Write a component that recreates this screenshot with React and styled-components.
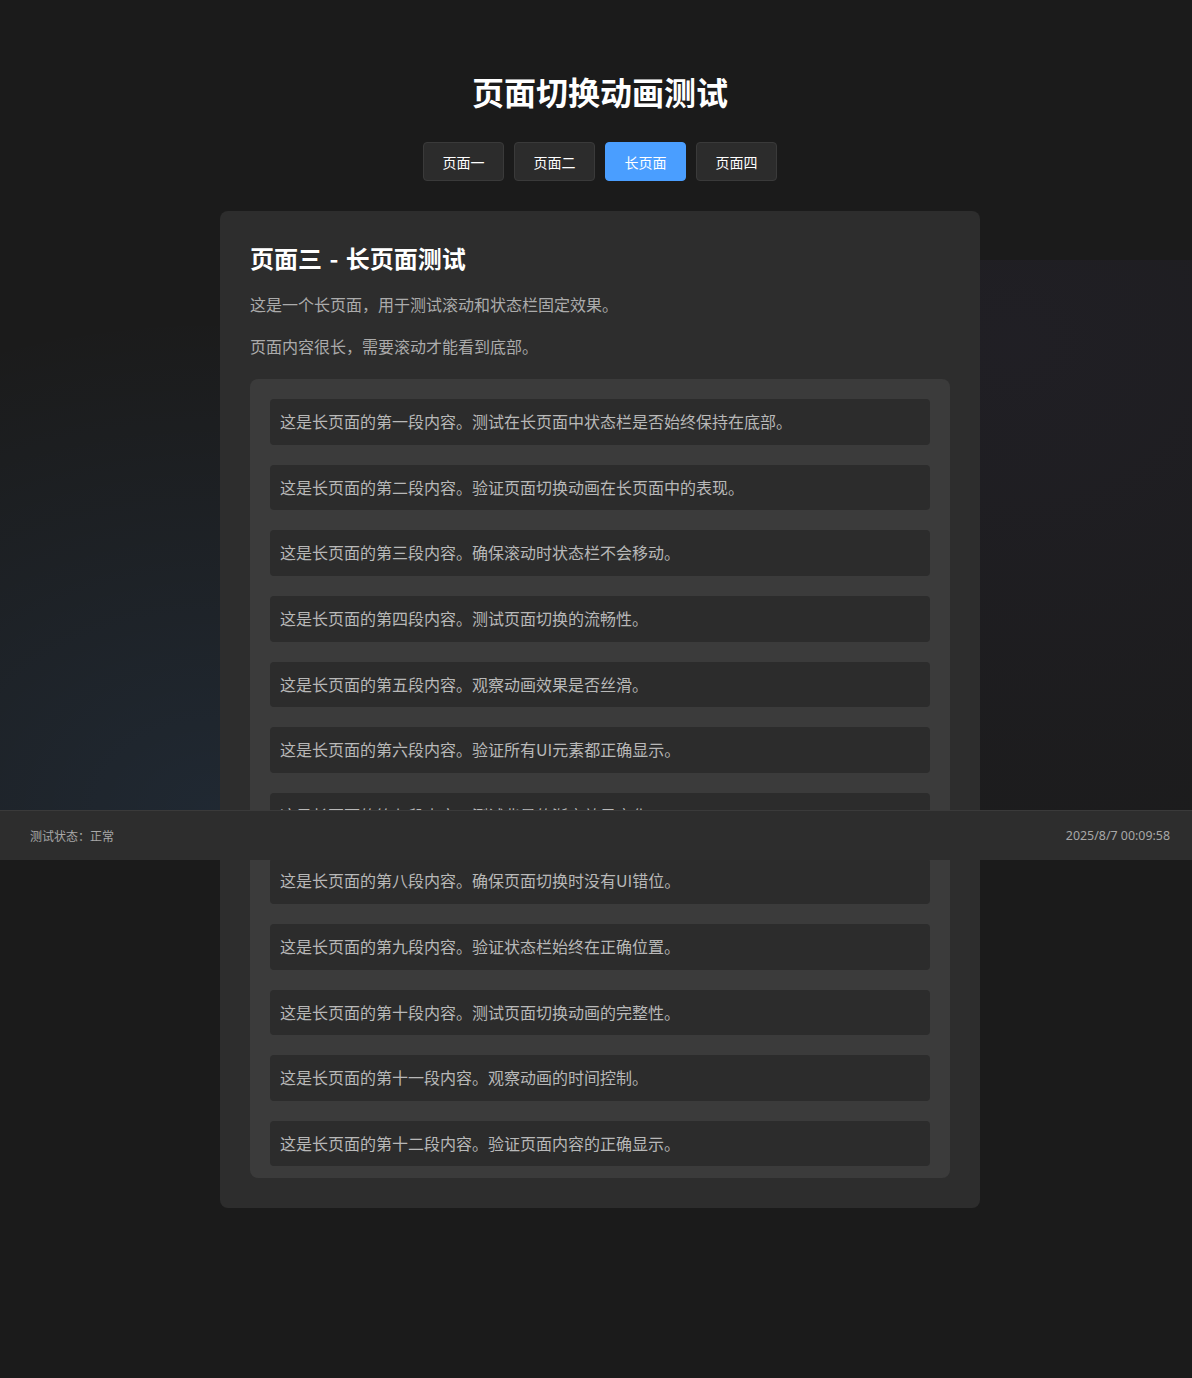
import React from 'react';
import styled, { createGlobalStyle } from 'styled-components';

const GlobalStyle = createGlobalStyle`
  html, body {
    margin: 0;
    padding: 0;
    background: #1b1b1b;
  }
  body {
    font-family: "Noto Sans CJK SC", "Noto Sans", sans-serif;
    color: #fff;
  }
`;

const Page = styled.div`
  position: relative;
  min-height: 1378px;
  overflow: hidden;
`;

const Glow = styled.div`
  position: absolute;
  top: 260px;
  left: 0;
  right: 0;
  height: 550px;
  z-index: 0;
  pointer-events: none;
  background:
    radial-gradient(ellipse 55% 90% at 18% 100%, rgba(74, 158, 255, 0.1), transparent 100%),
    radial-gradient(ellipse 60% 110% at 85% 15%, rgba(120, 100, 200, 0.055), transparent 100%);
`;

const Main = styled.main`
  position: relative;
  z-index: 1;
  display: flex;
  flex-direction: column;
  align-items: center;
  padding: 70px 0 0 8px;
`;

const Title = styled.h1`
  margin: 0;
  font-size: 32px;
  line-height: 42px;
  font-weight: 700;
  color: #fff;
`;

const Nav = styled.nav`
  display: flex;
  gap: 10px;
  margin-top: 30px;
`;

const NavButton = styled.button`
  width: 81px;
  height: 39px;
  padding: 0;
  border-radius: 4px;
  border: 1px solid ${p => (p.$active ? '#4a9eff' : '#3a3a3a')};
  background: ${p => (p.$active ? '#4a9eff' : '#2c2c2c')};
  color: #fff;
  font-family: inherit;
  font-size: 14px;
  cursor: pointer;
`;

const Card = styled.section`
  width: 760px;
  box-sizing: border-box;
  margin-top: 30px;
  padding: 30px;
  background: #2d2d2d;
  border-radius: 8px;
`;

const CardTitle = styled.h2`
  margin: 0 0 17px;
  font-size: 24px;
  line-height: 34px;
  font-weight: 700;
  word-spacing: 2px;
  color: #fff;
`;

const Text = styled.p`
  margin: 0 0 16px;
  font-size: 16px;
  line-height: 1.6;
  color: #ababab;
`;

const LongBox = styled.div`
  display: flex;
  flex-direction: column;
  gap: 20px;
  margin-top: 20px;
  padding: 20px 20px 12px;
  background: #3b3b3b;
  border-radius: 8px;
`;

const Item = styled.p`
  margin: 0;
  padding: 10px;
  background: #2c2c2c;
  border-radius: 4px;
  font-size: 16px;
  line-height: 1.6;
  color: #b8b8b8;
`;

const StatusBar = styled.footer`
  position: absolute;
  top: 810px;
  left: 0;
  right: 0;
  z-index: 2;
  height: 50px;
  box-sizing: border-box;
  display: flex;
  align-items: center;
  justify-content: space-between;
  padding: 0 22px 0 30px;
  background: #2d2d2d;
  border-top: 1px solid #3a3a3a;
  font-size: 12px;
  color: #a8a8a8;
`;

const Clock = styled.span`
  font-family: "Noto Sans", sans-serif;
  font-size: 12.4px;
`;

const tabs = ['页面一', '页面二', '长页面', '页面四'];

const paragraphs = [
  '这是长页面的第一段内容。测试在长页面中状态栏是否始终保持在底部。',
  '这是长页面的第二段内容。验证页面切换动画在长页面中的表现。',
  '这是长页面的第三段内容。确保滚动时状态栏不会移动。',
  '这是长页面的第四段内容。测试页面切换的流畅性。',
  '这是长页面的第五段内容。观察动画效果是否丝滑。',
  '这是长页面的第六段内容。验证所有UI元素都正确显示。',
  '这是长页面的第七段内容。测试背景的渐变效果变化。',
  '这是长页面的第八段内容。确保页面切换时没有UI错位。',
  '这是长页面的第九段内容。验证状态栏始终在正确位置。',
  '这是长页面的第十段内容。测试页面切换动画的完整性。',
  '这是长页面的第十一段内容。观察动画的时间控制。',
  '这是长页面的第十二段内容。验证页面内容的正确显示。',
];

export default function App() {
  return (
    <Page>
      <GlobalStyle />
      <Glow />
      <Main>
        <Title>页面切换动画测试</Title>
        <Nav>
          {tabs.map((t, i) => (
            <NavButton key={t} $active={i === 2}>{t}</NavButton>
          ))}
        </Nav>
        <Card>
          <CardTitle>页面三 - 长页面测试</CardTitle>
          <Text>这是一个长页面，用于测试滚动和状态栏固定效果。</Text>
          <Text>页面内容很长，需要滚动才能看到底部。</Text>
          <LongBox>
            {paragraphs.map(p => (
              <Item key={p}>{p}</Item>
            ))}
          </LongBox>
        </Card>
      </Main>
      <StatusBar>
        <span>测试状态：正常</span>
        <Clock>2025/8/7 00:09:58</Clock>
      </StatusBar>
    </Page>
  );
}
